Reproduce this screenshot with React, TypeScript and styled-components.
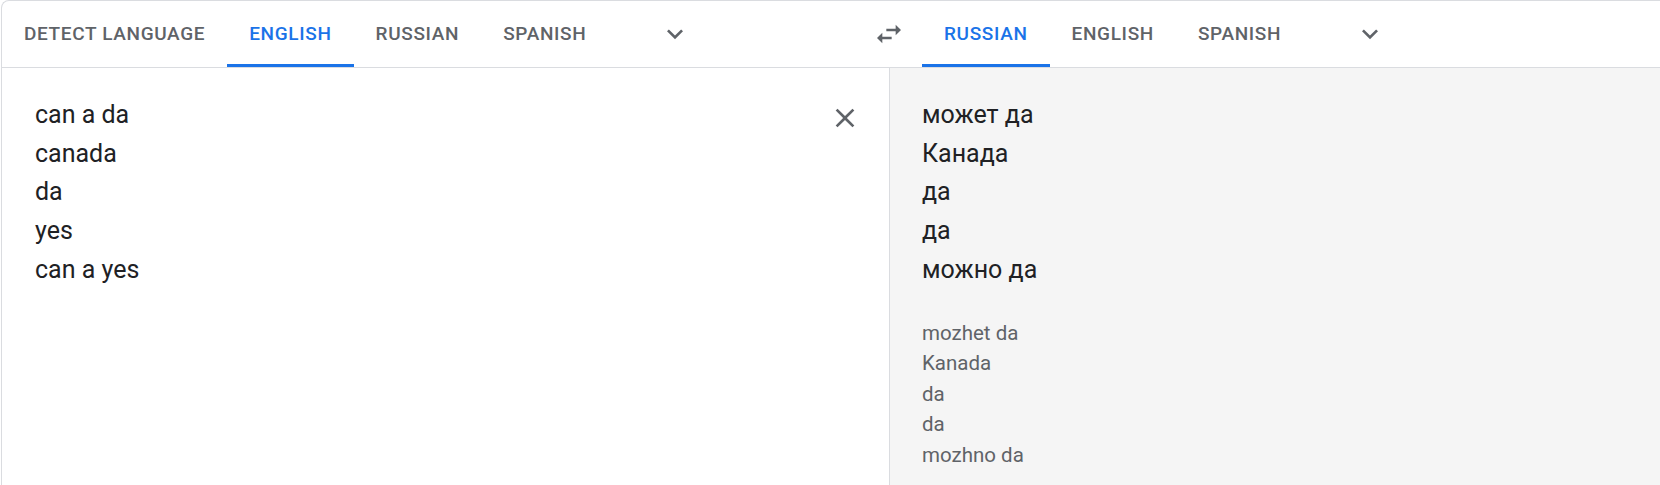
import React from "react";
import styled, { createGlobalStyle } from "styled-components";

const GlobalStyle = createGlobalStyle`
  html, body {
    margin: 0;
    padding: 0;
    background: #ffffff;
    overflow: hidden;
  }
  body {
    font-family: Roboto, "Noto Sans", "Liberation Sans", sans-serif;
  }
`;

const sourceLangs = ["DETECT LANGUAGE", "ENGLISH", "RUSSIAN", "SPANISH"];
const targetLangs = ["RUSSIAN", "ENGLISH", "SPANISH"];

const sourceLines = ["can a da", "canada", "da", "yes", "can a yes"];
const translatedLines = ["может да", "Канада", "да", "да", "можно да"];
const translitLines = ["mozhet da", "Kanada", "da", "da", "mozhno da"];

const ChevronIcon = () => (
   <svg width="32" height="32" viewBox="0 0 24 24" fill="#5f6368">
      <path d="M16.59 8.59L12 13.17 7.41 8.59 6 10l6 6 6-6z" />
   </svg>
);

const SwapIcon = () => (
   <svg width="32" height="32" viewBox="0 0 24 24" fill="#5f6368">
      <path d="M6.99 11L3 15l3.99 4v-3H14v-2H6.99v-3zM21 9l-4-4v3H10v2h7v3l4-4z" />
   </svg>
);

const CloseIcon = () => (
   <svg width="32" height="32" viewBox="0 0 24 24" fill="#5f6368">
      <path d="M19 6.41L17.59 5 12 10.59 6.41 5 5 6.41 10.59 12 5 17.59 6.41 19 12 13.41 17.59 19 19 17.59 13.41 12z" />
   </svg>
);

const App = () => {
   return (
      <Page>
         <GlobalStyle />
         <Card>
            <Header>
               <LangBar $width="854px">
                  {sourceLangs.map((lang) => (
                     <Tab key={lang} $active={lang === "ENGLISH"}>{lang}</Tab>
                  ))}
                  <MoreButton><ChevronIcon /></MoreButton>
               </LangBar>
               <SwapSlot>
                  <IconButton><SwapIcon /></IconButton>
               </SwapSlot>
               <LangBar>
                  {targetLangs.map((lang) => (
                     <Tab key={lang} $active={lang === "RUSSIAN"}>{lang}</Tab>
                  ))}
                  <MoreButton><ChevronIcon /></MoreButton>
               </LangBar>
            </Header>
            <Body>
               <SourcePanel>
                  <SourceText>
                     {sourceLines.map((line, i) => (
                        <div key={i}>{line}</div>
                     ))}
                  </SourceText>
                  <IconButton><CloseIcon /></IconButton>
               </SourcePanel>
               <TargetPanel>
                  <TargetText>
                     {translatedLines.map((line, i) => (
                        <div key={i}>{line}</div>
                     ))}
                  </TargetText>
                  <Translit>
                     {translitLines.map((line, i) => (
                        <div key={i}>{line}</div>
                     ))}
                  </Translit>
               </TargetPanel>
            </Body>
         </Card>
      </Page>
   );
};

const Page = styled.div`
   padding-left: 1px;
   height: 485px;
   overflow: hidden;
`;

const Card = styled.div`
   border-left: 1px solid #dadce0;
   border-top: 1px solid #dadce0;
   border-top-left-radius: 8px;
   background: #ffffff;
`;

const Header = styled.div`
   display: flex;
   height: 66px;
   border-bottom: 1px solid #dadce0;
`;

const LangBar = styled.div<{ $width?: string }>`
   display: flex;
   align-items: stretch;
   width: ${(p) => p.$width || "auto"};
   flex-shrink: 0;
`;

const Tab = styled.div<{ $active?: boolean }>`
   display: flex;
   align-items: center;
   box-sizing: border-box;
   padding: 1px 22px 0;
   font-size: 19px;
   font-weight: 500;
   letter-spacing: 0.65px;
   color: ${(p) => (p.$active ? "#1a73e8" : "#5f6368")};
   border-bottom: 3px solid ${(p) => (p.$active ? "#1a73e8" : "transparent")};
   white-space: nowrap;
`;

const MoreButton = styled.div`
   display: flex;
   align-items: center;
   justify-content: center;
   width: 48px;
   margin-left: 43px;
   padding-bottom: 1px;
`;

const SwapSlot = styled.div`
   display: flex;
   align-items: center;
   justify-content: center;
   width: 66px;
   flex-shrink: 0;
`;

const IconButton = styled.div`
   display: flex;
   align-items: center;
   justify-content: center;
   width: 48px;
   height: 48px;
   flex-shrink: 0;
`;

const Body = styled.div`
   display: grid;
   grid-template-columns: 888px 1fr;
   height: 420px;
`;

const SourcePanel = styled.div`
   display: flex;
   align-items: flex-start;
   padding: 26px 20px 0 33px;
   border-right: 1px solid #dadce0;
`;

const SourceText = styled.div`
   flex: 1;
   padding-top: 2px;
   font-size: 25px;
   line-height: 38.7px;
   color: #202124;
`;

const TargetPanel = styled.div`
   background: #f5f5f5;
   padding: 28px 32px 0;
`;

const TargetText = styled.div`
   font-size: 25px;
   line-height: 38.7px;
   color: #202124;
`;

const Translit = styled.div`
   margin-top: 28px;
   font-size: 20.5px;
   line-height: 30.6px;
   color: #5f6368;
`;

export default App;
